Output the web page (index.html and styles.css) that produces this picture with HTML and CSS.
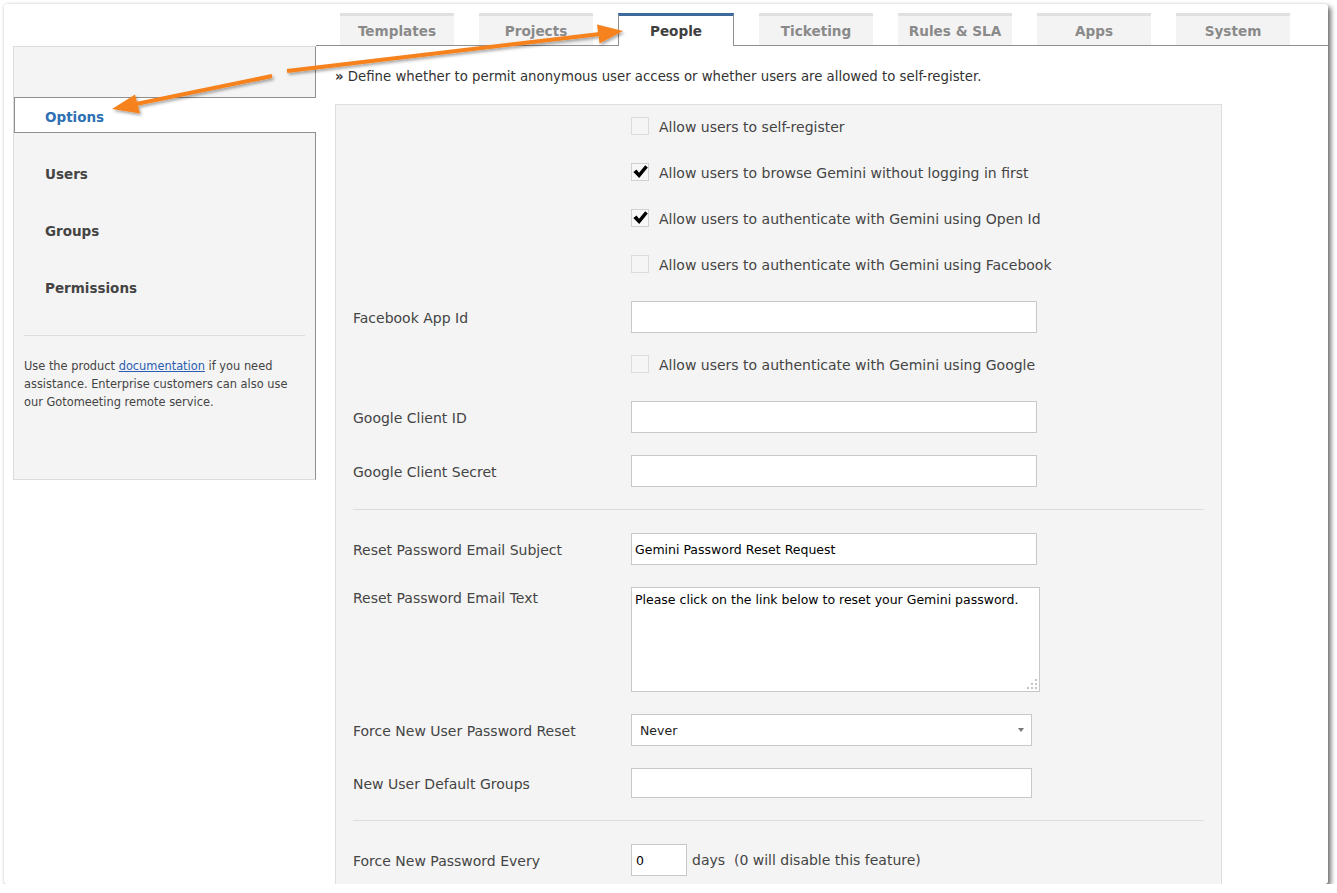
FILE: index.html
```html
<!DOCTYPE html>
<html lang="en">
<head>
<meta charset="utf-8">
<title>People - Options</title>
<link rel="stylesheet" href="styles.css">
</head>
<body>
<div class="window">
  <aside class="sidebar">
    <nav class="side-nav">
      <a class="side-item active" href="#">Options</a>
      <a class="side-item" href="#">Users</a>
      <a class="side-item" href="#">Groups</a>
      <a class="side-item" href="#">Permissions</a>
    </nav>
    <hr class="side-sep">
    <p class="help">Use the product <a href="#">documentation</a> if you need<br>assistance. Enterprise customers can also use<br>our Gotomeeting remote service.</p>
  </aside>

  <main class="main">
    <div class="tabbar">
      <div class="tab">Templates</div>
      <div class="tab">Projects</div>
      <div class="tab active">People</div>
      <div class="tab">Ticketing</div>
      <div class="tab">Rules &amp; SLA</div>
      <div class="tab">Apps</div>
      <div class="tab">System</div>
    </div>

    <div class="content">
      <p class="desc"><span class="raquo">&raquo;</span> Define whether to permit anonymous user access or whether users are allowed to self-register.</p>

      <div class="panel">
        <div class="row cb">
          <div class="label"></div>
          <span class="check"></span>
          <span class="cb-label">Allow users to self-register</span>
        </div>
        <div class="row cb">
          <div class="label"></div>
          <span class="check checked"><svg width="15" height="14" viewBox="0 0 14 13"><path d="M0.3 6.6 L3.3 4.2 L5.6 7.2 L11.4 0.3 L13.8 2.3 L5.8 12.2 Z" fill="#000"/></svg></span>
          <span class="cb-label">Allow users to browse Gemini without logging in first</span>
        </div>
        <div class="row cb">
          <div class="label"></div>
          <span class="check checked"><svg width="15" height="14" viewBox="0 0 14 13"><path d="M0.3 6.6 L3.3 4.2 L5.6 7.2 L11.4 0.3 L13.8 2.3 L5.8 12.2 Z" fill="#000"/></svg></span>
          <span class="cb-label">Allow users to authenticate with Gemini using Open Id</span>
        </div>
        <div class="row cb">
          <div class="label"></div>
          <span class="check"></span>
          <span class="cb-label">Allow users to authenticate with Gemini using Facebook</span>
        </div>
        <div class="row field">
          <div class="label">Facebook App Id</div>
          <input class="input" type="text" value="">
        </div>
        <div class="row cb">
          <div class="label"></div>
          <span class="check"></span>
          <span class="cb-label">Allow users to authenticate with Gemini using Google</span>
        </div>
        <div class="row field">
          <div class="label">Google Client ID</div>
          <input class="input" type="text" value="">
        </div>
        <div class="row field">
          <div class="label">Google Client Secret</div>
          <input class="input" type="text" value="">
        </div>
        <hr class="sep">
        <div class="row field">
          <div class="label">Reset Password Email Subject</div>
          <input class="input" type="text" value="Gemini Password Reset Request">
        </div>
        <div class="row field top">
          <div class="label">Reset Password Email Text</div>
          <div class="ta-wrap">
            <textarea class="textarea">Please click on the link below to reset your Gemini password.</textarea>
            <svg class="grip" width="10" height="10" viewBox="0 0 10 10">
              <rect x="8" y="0" width="2" height="2" fill="#c4c4c4"/>
              <rect x="4" y="4" width="2" height="2" fill="#c4c4c4"/>
              <rect x="8" y="4" width="2" height="2" fill="#c4c4c4"/>
              <rect x="0" y="8" width="2" height="2" fill="#c4c4c4"/>
              <rect x="4" y="8" width="2" height="2" fill="#c4c4c4"/>
              <rect x="8" y="8" width="2" height="2" fill="#c4c4c4"/>
            </svg>
          </div>
        </div>
        <div class="row field">
          <div class="label">Force New User Password Reset</div>
          <div class="select-wrap">
            <select class="select"><option>Never</option></select>
          </div>
        </div>
        <div class="row field short">
          <div class="label">New User Default Groups</div>
          <input class="input narrow" type="text" value="">
        </div>
        <hr class="sep">
        <div class="row field">
          <div class="label">Force New Password Every</div>
          <input class="input days" type="text" value="0">
          <span class="days-text">days  (0 will disable this feature)</span>
        </div>
      </div>
    </div>
  </main>

  <svg class="arrows" width="1324" height="880" viewBox="0 0 1324 880">
    <defs>
      <filter id="sh" x="-10%" y="-50%" width="120%" height="200%">
        <feDropShadow dx="1.5" dy="2" stdDeviation="1.4" flood-color="#000" flood-opacity="0.35"/>
      </filter>
    </defs>
    <g filter="url(#sh)" fill="#f5821f" stroke="#f5821f">
      <line x1="283" y1="67" x2="596" y2="30" stroke-width="4"/>
      <polygon points="619,27 593,20.5 595.5,39.5" stroke="none"/>
      <line x1="268" y1="72" x2="132" y2="100" stroke-width="4"/>
      <polygon points="108,105 131,90.5 136,109.5" stroke="none"/>
    </g>
  </svg>
</div>
</body>
</html>
```
FILE: styles.css
```css
* { box-sizing: border-box; }

body {
  margin: 0;
  background: #fff;
  font-family: "DejaVu Sans", Verdana, sans-serif;
}

.window {
  position: relative;
  margin: 4px 0 0 4px;
  width: 1324px;
  height: 880px;
  background: #fff;
  border-radius: 3px;
  box-shadow: 3px 3px 5px rgba(0, 0, 0, 0.55), 0 0 3px rgba(0, 0, 0, 0.15);
  overflow: hidden;
  display: flex;
  align-items: flex-start;
}

/* Sidebar */
.sidebar {
  flex: none;
  width: 303px;
  margin: 42px 0 0 9px;
  background: #f4f4f4;
  border: 1px solid #dcdcdc;
  border-right-color: #8f8f8f;
  padding: 50px 0 68px;
}

.side-nav {
  display: flex;
  flex-direction: column;
  gap: 21px;
}

.side-item {
  display: block;
  height: 36px;
  line-height: 39px;
  border: 1px solid transparent;
  border-right: 0;
  padding-left: 30px;
  font-size: 13.5px;
  font-weight: bold;
  color: #444;
  text-decoration: none;
}

.side-item.active {
  background: #fff;
  border-color: #8f8f8f;
  margin-right: -1px;
  color: #2e70b4;
}

.side-sep {
  margin: 31px 10px 21px;
  border: 0;
  border-top: 1px solid #dddddd;
  height: 0;
}

.help {
  margin: 0 10px;
  font-size: 11.4px;
  line-height: 18px;
  color: #444;
}

.help a {
  color: #2a5db0;
  text-decoration: underline;
}

/* Main */
.main {
  flex: 1;
  min-width: 0;
}

.tabbar {
  display: flex;
  align-items: flex-start;
  gap: 25px;
  margin-top: 9px;
  padding-left: 24px;
  height: 33px;
  border-bottom: 1px solid #8f8f8f;
}

.tab {
  flex: none;
  width: 114px;
  height: 32px;
  border-top: 3px solid #e0e0e0;
  background: #f3f3f3;
  text-align: center;
  line-height: 30px;
  font-size: 13.6px;
  font-weight: bold;
  color: #8a8a8a;
}

.tab.active {
  width: 116px;
  height: 33px;
  background: #fff;
  border-top-color: #3c6a9c;
  border-left: 1px solid #8f8f8f;
  border-right: 1px solid #8f8f8f;
  color: #404040;
}

.content {
  padding: 22px 0 0 19px;
}

.desc {
  margin: 0;
  font-size: 13.3px;
  line-height: 17px;
  color: #333;
}

.raquo {
  font-weight: bold;
}

.panel {
  margin-top: 19px;
  width: 887px;
  background: #f4f4f4;
  border: 1px solid #dedede;
  padding: 5px 17px 40px;
}

.row {
  display: flex;
  align-items: center;
  height: 32px;
  margin-top: 22px;
}

.row:first-child { margin-top: 0; }
.cb + .cb { margin-top: 14px; }
.cb + .field { margin-top: 21px; }
.field + .cb { margin-top: 15px; }
.sep + .row { margin-top: 23px; }

.row.top {
  align-items: flex-start;
  height: auto;
}

.row.short { height: 30px; }

.label {
  flex: none;
  width: 278px;
  font-size: 14px;
  line-height: 20px;
  padding-top: 1px;
  color: #444;
}

.check {
  flex: none;
  width: 18px;
  height: 18px;
  border: 1px solid #dcdcdc;
  background: #f5f5f5;
  display: flex;
  align-items: center;
  justify-content: center;
}

.check.checked {
  border-color: #d0d0d0;
  background: #f7f7f7;
}

.cb-label {
  margin-left: 10px;
  font-size: 14px;
  line-height: 20px;
  padding-top: 1px;
  color: #444;
}

.input {
  width: 406px;
  height: 32px;
  margin: 0;
  border: 1px solid #c8c8c8;
  border-radius: 0;
  background: #fff;
  padding: 0 3px;
  font-family: "DejaVu Sans", Verdana, sans-serif;
  font-size: 12.5px;
  color: #000;
  outline: none;
}

.input.narrow {
  width: 401px;
  height: 30px;
}

.input.days {
  width: 56px;
  padding-left: 4px;
}

.days-text {
  margin-left: 5px;
  font-size: 14px;
  color: #444;
  white-space: pre;
}

.sep {
  margin: 22px 0 0;
  border: 0;
  border-top: 1px solid #dcdcdc;
  height: 0;
}

.ta-wrap {
  position: relative;
  width: 409px;
  height: 105px;
}

.textarea {
  display: block;
  width: 409px;
  height: 105px;
  margin: 0;
  border: 1px solid #c8c8c8;
  border-radius: 0;
  background: #fff;
  padding: 4px 3px;
  font-family: "DejaVu Sans", Verdana, sans-serif;
  font-size: 12.5px;
  line-height: 16px;
  color: #000;
  resize: none;
  outline: none;
}

.grip {
  position: absolute;
  right: 3px;
  bottom: 3px;
}

.select-wrap {
  position: relative;
  width: 401px;
  height: 32px;
}

.select {
  -webkit-appearance: none;
  appearance: none;
  width: 401px;
  height: 32px;
  margin: 0;
  border: 1px solid #c8c8c8;
  border-radius: 0;
  background: #fff;
  padding: 0 8px;
  font-family: "DejaVu Sans", Verdana, sans-serif;
  font-size: 12.5px;
  color: #222;
  outline: none;
}

.select-wrap::after {
  content: "";
  position: absolute;
  right: 8px;
  top: 14px;
  border-left: 3.5px solid transparent;
  border-right: 3.5px solid transparent;
  border-top: 4px solid #777;
}

.arrows {
  position: absolute;
  top: 0;
  left: 0;
  pointer-events: none;
}
```
